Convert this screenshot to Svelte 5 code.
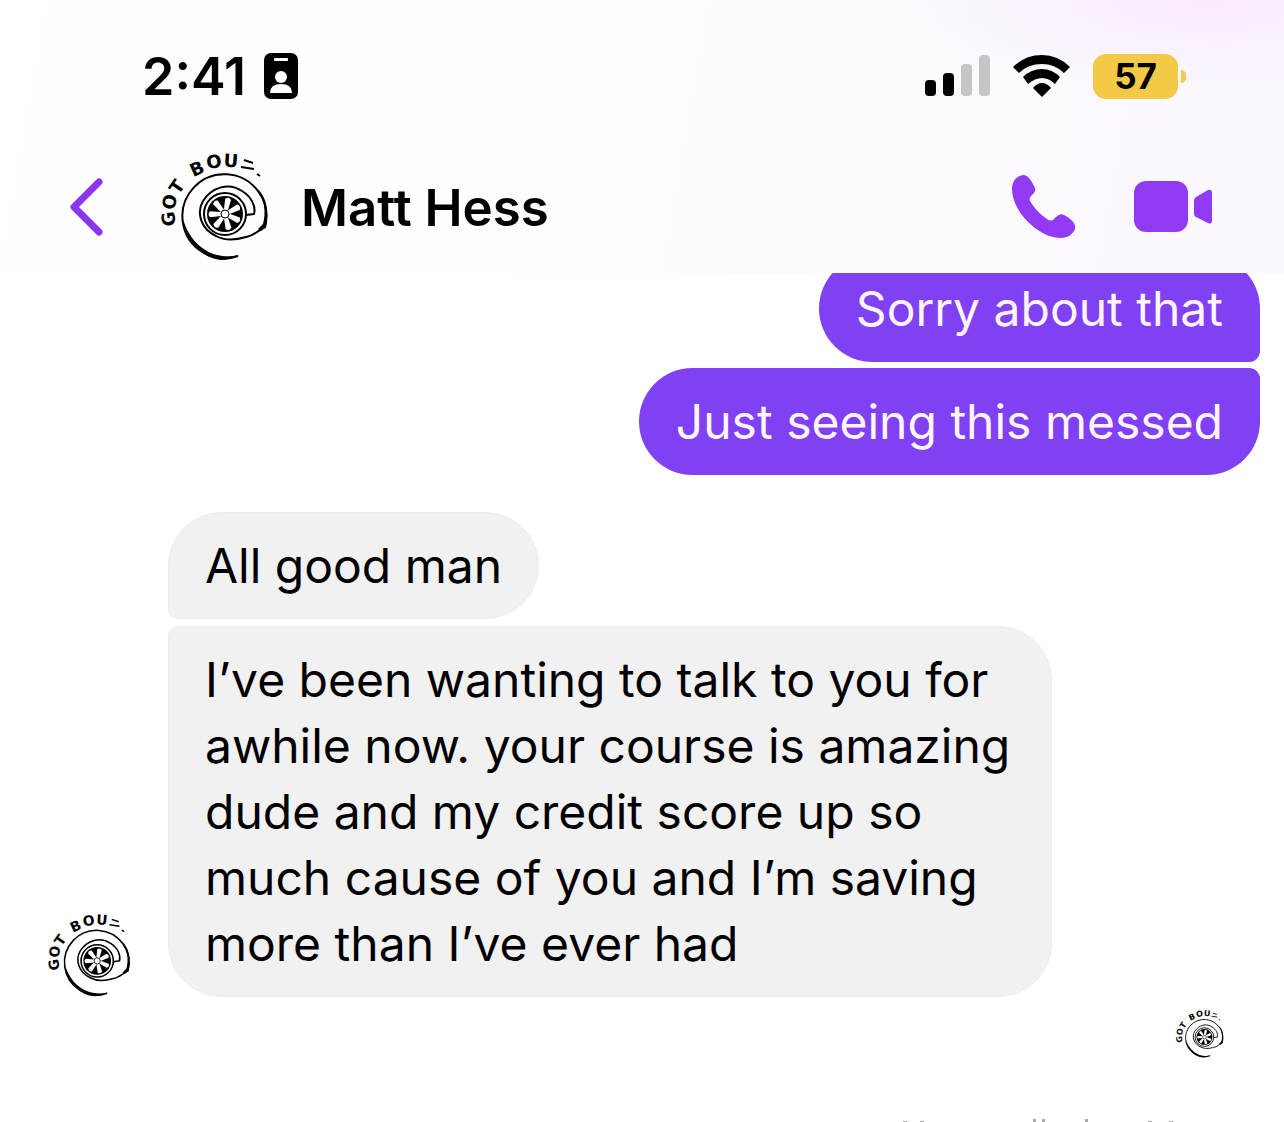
<script lang="ts">
    type Group = { from: 'me' | 'them'; messages: string[] };

    const contact = 'Matt Hess';
    const time = '2:41';
    const battery = 57;

    const groups: Group[] = [
        { from: 'me', messages: ['Sorry about that', 'Just seeing this messed'] },
        {
            from: 'them',
            messages: [
                'All good man',
                'I’ve been wanting to talk to you for awhile now. your course is amazing dude and my credit score up so much cause of you and I’m saving more than I’ve ever had'
            ]
        }
    ];

    const spokes = [0, 1, 2, 3, 4, 5, 6].map((n) => 12 + (n * 360) / 7);

    const lettering = [
        { char: 'G', x: 8, y: 66, angle: -97 },
        { char: 'O', x: 9, y: 49, angle: -80 },
        { char: 'T', x: 16, y: 34, angle: -55 },
        { char: 'B', x: 36, y: 16, angle: -24 },
        { char: 'O', x: 53, y: 9, angle: -8 },
        { char: 'U', x: 70, y: 8, angle: 4 }
    ];
</script>

{#snippet avatar(label: string)}
    <svg class="logo" viewBox="0 0 108 108" role="img" aria-label={label}>
        <!-- lettering round the rim -->
        <g class="lettering">
            {#each lettering as { char, x, y, angle }}
                <text y="6" transform="translate({x} {y}) rotate({angle})">{char}</text>
            {/each}
        </g>
        <path class="dash" d="M83 7L92 10M80 14L93 16M96 21L99 23" />
        <!-- turbo housing -->
        <path class="line" d="M77 103A42 42 0 1 1 104 74C98 77 92 83 85 84C75 87 64 88 55 83C40 76 35 60 42 48C51 34 68 29 81 38C91 44 95 54 93 61L85 62" />
        <path d="M22 66C24 87 40 105 60 107Q70 107 78 102C66 105 51 103 40 94C30 86 25 76 22 66Z" />
        <path d="M96 35C104 46 105 61 102 71L97 76L100 78L105 74C108 58 106 45 96 35Z" />
        <circle class="thin" cx="64" cy="61" r="21" />
        <circle cx="64" cy="61" r="18" />
        {#each spokes as angle}
            <path class="spoke" transform="rotate({angle} 64 61)" d="M62 57L61 46Q64 43 67 46L66 57Z" />
        {/each}
        <circle class="hub" cx="64" cy="61" r="4" />
    </svg>
{/snippet}

<main class="chat">
    <header>
        <div class="status">
            <div class="clock">
                <time>{time}</time>
                <svg width="34" height="46" viewBox="0 0 34 46" aria-hidden="true">
                    <rect width="34" height="46" rx="7" />
                    <rect x="10" y="5" width="14" height="3" rx="1" fill="#fff" />
                    <circle cx="17" cy="24" r="6" fill="#fff" />
                    <path d="M6 40Q6 31 17 31Q28 31 28 40Z" fill="#fff" />
                </svg>
            </div>
            <div class="indicators">
                <svg width="66" height="42" viewBox="0 0 66 42" aria-label="Signal" role="img">
                    <rect y="25" width="11" height="16" rx="4" />
                    <rect x="18" y="18" width="11" height="23" rx="4" />
                    <rect x="36" y="9" width="11" height="32" rx="4" fill="#c6c4c8" />
                    <rect x="54" width="11" height="41" rx="4" fill="#c6c4c8" />
                </svg>
                <svg width="58" height="43" viewBox="0 0 58 43" aria-label="Wi-Fi" role="img">
                    <path d="M0 12Q12 0 29 0Q45 0 57 12L51 18Q42 9 29 9Q15 9 6 18Z" />
                    <path d="M10 22Q18 14 29 14Q39 14 47 22L42 29Q36 23 29 23Q22 23 15 29Z" />
                    <path d="M20 33Q24 28 29 28Q34 28 38 33L29 42Z" />
                </svg>
                <div class="battery">
                    <span class="level">{battery}</span>
                    <span class="tip"></span>
                </div>
            </div>
        </div>

        <nav>
            <button class="back" aria-label="Back">
                <svg width="34" height="58" viewBox="0 0 34 58">
                    <path d="M30 4L5 29L30 54" />
                </svg>
            </button>
            <div class="photo">{@render avatar(contact)}</div>
            <h1>{contact}</h1>
            <button class="call" aria-label="Audio call">
                <svg width="64" height="64" viewBox="0 0 64 64">
                    <path d="M11 0C4 1 0 7 0 14C0 37 27 63 49 63C56 63 61 59 63 54C64 49 61 45 52 40C48 38 45 41 42 44C40 46 38 46 35 44C29 40 22 33 18 26C17 24 18 22 20 20C24 16 24 14 22 11C18 3 15 0 11 0Z" />
                </svg>
            </button>
            <button aria-label="Video call">
                <svg width="78" height="52" viewBox="0 0 78 52">
                    <rect width="54" height="51" rx="12" />
                    <path d="M62 16L74 9Q78 8 78 12V39Q78 44 74 42L62 36Q60 35 60 32V20Q60 17 62 16Z" />
                </svg>
            </button>
        </nav>
    </header>

    <section class="thread" aria-label="Messages">
        {#each groups as group}
            <div class="group {group.from}">
                {#if group.from === 'them'}
                    <div class="sender">{@render avatar(contact)}</div>
                {/if}
                <div class="bubbles">
                    {#each group.messages as message}
                        <p>{message}</p>
                    {/each}
                </div>
            </div>
        {/each}
        <div class="seen">{@render avatar(`Seen by ${contact}`)}</div>
    </section>

    <!-- upper edge of the line under the thread -->
    <svg class="edge" width="272" height="3" viewBox="0 0 272 3" aria-hidden="true">
        <path d="M0 2h4v1H0zM17 2h4v1h-4zM130 0h3v3h-3zM139 0h3v3h-3zM182 0h3v3h-3zM245 2h4v1h-4zM266 2h4v1h-4z" />
    </svg>
</main>

<style>
    :global(body) {
        margin: 0;
        background: #fff;
    }

    .chat {
        min-height: 100vh;
        overflow: hidden;
        color: #000;
        font-family: Inter, 'Liberation Sans', sans-serif;
    }

    header {
        position: relative;
        box-sizing: border-box;
        height: 273px;
        padding: 52px 72px 0 69px;
        background:
            radial-gradient(ellipse 300px 90px at 94% 0, #f8eafc, transparent),
            linear-gradient(100deg, #fff 0%, #fdfcfe 45%, #faf7fe 100%);
    }

    .status,
    .clock,
    .indicators,
    .battery,
    nav {
        display: flex;
        align-items: center;
    }

    .status {
        justify-content: space-between;
        height: 48px;
        padding: 0 26px 0 73px;
    }

    .clock {
        gap: 18px;
        font-size: 52px;
        font-weight: 600;
    }

    .indicators {
        gap: 22px;
    }

    .level {
        width: 85px;
        border-radius: 13px;
        background: #f2ca45;
        font-size: 35px;
        font-weight: 700;
        line-height: 45px;
        text-align: center;
    }

    .tip {
        width: 5px;
        height: 13px;
        margin-left: 3px;
        border-radius: 0 6px 6px 0;
        background: #f2ca45;
    }

    nav {
        height: 108px;
        margin-top: 53px;
    }

    button {
        display: flex;
        padding: 0;
        border: none;
        background: none;
        cursor: pointer;
        fill: #9239f3;
    }

    .back path {
        fill: none;
        stroke: #8a35ef;
        stroke-width: 7;
        stroke-linecap: round;
        stroke-linejoin: round;
    }

    .photo {
        width: 108px;
        margin: 0 32px 0 58px;
    }

    h1 {
        flex: 1;
        margin: 0;
        font-size: 51px;
        font-weight: 600;
    }

    .call {
        margin-right: 58px;
    }

    .logo {
        display: block;
        width: 100%;
        overflow: visible;
    }

    .lettering {
        font-family: 'DejaVu Sans', sans-serif;
        font-size: 18px;
        font-weight: 700;
        text-anchor: middle;
    }

    .line,
    .thin,
    .dash {
        fill: none;
        stroke: #000;
        stroke-width: 2;
    }

    .spoke,
    .hub {
        fill: #fff;
    }

    .hub {
        stroke: #000;
    }

    .thread {
        display: flex;
        flex-direction: column;
        gap: 37px;
        margin-top: -18px;
    }

    .group {
        display: flex;
        align-items: flex-end;
    }

    .bubbles {
        display: flex;
        flex-direction: column;
        align-items: flex-start;
        gap: 7px;
        max-width: 884px;
    }

    p {
        box-sizing: border-box;
        margin: 0;
        padding: 20px 36px 19px;
        border: 1px solid #ececec;
        border-radius: 54px;
        background: #f1f1f1;
        font-size: 48px;
        line-height: 66px;
    }

    .them p:first-child {
        border-bottom-left-radius: 10px;
    }

    .them p:last-child {
        border-top-left-radius: 10px;
    }

    .me {
        justify-content: flex-end;
        padding-right: 24px;
    }

    .me .bubbles {
        align-items: flex-end;
        gap: 6px;
    }

    .me p {
        border: none;
        padding: 21px 37px 20px;
        background: #8040f3;
        color: #fdf5ff;
    }

    .me p:first-child {
        border-bottom-right-radius: 11px;
    }

    .me p:last-child {
        border-top-right-radius: 11px;
    }

    .sender {
        flex: none;
        width: 83px;
        margin: 0 37px 0 48px;
    }

    .seen {
        align-self: flex-end;
        width: 48px;
        margin: -24px 60px 0 0;
    }

    .edge {
        display: block;
        margin: 61px 109px 0 auto;
        fill: #aaa;
    }
</style>
